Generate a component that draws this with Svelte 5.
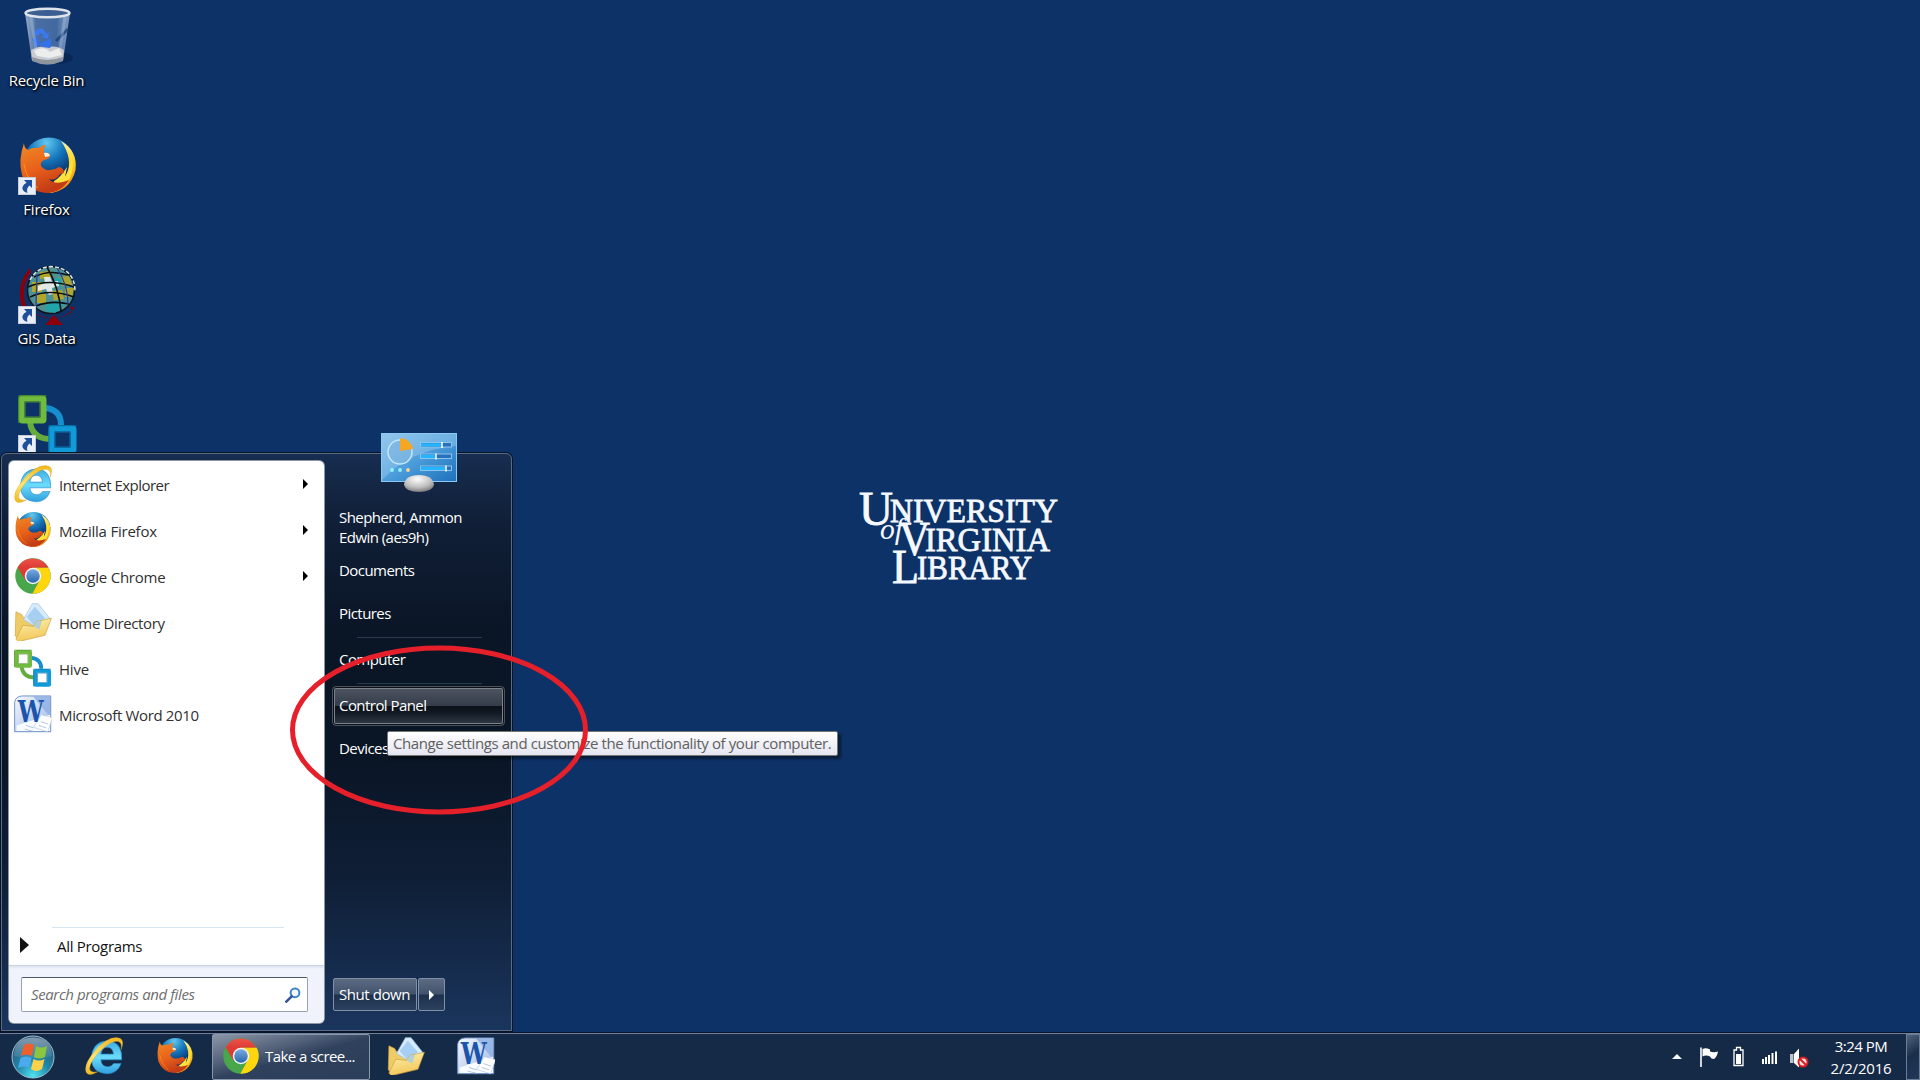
<script>
  const shortcuts = [
    { name: 'Recycle Bin', icon: 'bin' },
    { name: 'Firefox', icon: 'firefox', link: true },
    { name: 'GIS Data', icon: 'gis', link: true },
    { name: 'Hive', icon: 'hive', link: true }
  ];
  const programs = [
    { name: 'Internet Explorer', icon: 'ie', more: true, fit: 'tight' },
    { name: 'Mozilla Firefox', icon: 'firefox', more: true, fit: 'loose' },
    { name: 'Google Chrome', icon: 'chrome', more: true, fit: 'loose' },
    { name: 'Home Directory', icon: 'folder', fit: 'snug' },
    { name: 'Hive', icon: 'hive', fit: 'loose' },
    { name: 'Microsoft Word 2010', icon: 'word', fit: 'snug' }
  ];
</script>

{#snippet art(kind)}
  <svg class="art" viewBox="0 0 60 60">
    {#if kind === 'bin'}
      <ellipse cx="38" cy="51" rx="17" ry="6" fill="#061c42" opacity=".5" />
      <path d="M7 6 L14 54 Q29 61 45 54 L52 6Z" fill="url(#glass)" />
      <path d="M13 43 Q21 38 29 40 Q39 38 46 43 L45 53 Q29 60 14 53Z" fill="#c9cbd0" />
      <path d="M16 44 Q25 38 32 45 L41 41 L44 48 L31 51 L19 49Z" fill="#eceded" />
      <path d="M14 50 Q29 56 45 50 L44.500 54 Q29 61 14.500 54Z" fill="#8f959d" />
      <path d="M16 26 Q19 20 25 22 L29 27 L31 25 L30 32 L24 30 L26 28 L22 26 L20 30Z" fill="#3d78ee" />
      <path d="M14 32 L20 30 L21 34 L22 38 L18 40Z M24 40 L22 36 L27 34 L32 31 Q35 37 32 41Z" fill="#3470e6" />
      <path d="M38 34 L50 22" stroke="#153a75" stroke-width="3" opacity=".7" />
      <path d="M13 10 L18 42 M47 10 L42 42" stroke="#bcd4ee" stroke-width="3" opacity=".3" />
      <ellipse cx="29.500" cy="6" rx="22" ry="4.300" fill="#3c5f93" stroke="#dfe4ea" stroke-width="2.500" />
    {:else if kind === 'firefox'}
      <circle cx="31" cy="28" r="26.500" fill="url(#globe)" />
      <path d="M43 5 Q60 15 57.500 34 Q52 56 30 57 Q43 49 49 38 Q55 22 43 5Z" fill="url(#flame)" />
      <path d="M51 16 Q55 27 47 41 L49 31 Q42 42 36 45 L33 57 Q50 53 54 36 Q57 24 51 16Z" fill="#ffe13c" />
      <path d="M6 7 Q6 12 10 14 Q14 11 21 12 Q23 9 28 9 Q25 13 26 17 Q32 16 32 20 Q31 23 26 24 Q22 26 23 30 Q27 35 32 34 Q37 34 41 31 Q46 32 46 37 Q42 37 40 41 Q36 45 31 43 Q37 50 51 44 Q43 57 28 57 Q10 55 4 39 Q0 24 6 7Z" fill="url(#fox)" />
      <path d="M26 17 Q31 16 32 20 L27 21Z" fill="#fff0de" />
      <path d="M6 28 Q8 43 20 52" fill="none" stroke="#f4b21c" stroke-width="1.200" opacity=".55" />
    {:else if kind === 'gis'}
      <path d="M12 3 Q-3 20 4 42 L8 41 Q2 23 13 7Z M8 43 Q35 64 57 43 L52 41 L54 47 Q37 59 14 47Z M36 50 L27 60 H45Z" fill="#8b0008" />
      <circle cx="33" cy="25" r="23.500" fill="#4f9296" stroke="#10131c" stroke-width="1.500" />
      <path d="M14 17 h10 v10 h-10Z M18 29 h10 v9 h-10Z M22 7 l11 -1 v7 l-11 1Z M40 12 l11 -1 l3 9 l-11 1Z M34 26 l10 -1 l2 9 l-10 2Z M47 23 l9 0 l-2 9 l-7 0Z" fill="#b0a62a" />
      <path d="M29 38 l10 -3 l7 5 l-9 8 l-9-2Z M36 14 l7 -2 l2 8 l-7 2Z" fill="#22a5a8" />
      <path d="M26 12 l6 0 l2 5 l6 -1 l1 5 l-7 2 l1 6 l-4 1 l-3-6 l-8 2 l0-5 l7-3Z" fill="#f1f3ee" opacity=".9" />
      <path d="M10 22 Q30 13 56 22 M12 32 Q31 23 56 32 M29 2 Q41 23 43 46 M16 12 Q31 4 50 10 M18 41 Q33 35 51 39" fill="none" stroke="#0c0e14" stroke-width="1.600" />
      <path d="M19 9 L18 41 M39 3 Q50 20 50 39" stroke="#2a3e9a" stroke-width="1.300" fill="none" />
      <path d="M12 15 Q19 2 33 1.500 Q57 3 57 27" fill="none" stroke="#dce6e6" stroke-width="1.500" stroke-dasharray="4 2" />
    {:else if kind === 'hive'}
      <path d="M28 14 Q43 16 43 31" fill="none" stroke="#168fce" stroke-width="6" />
      <path d="M12 28 Q14 44 31 45" fill="none" stroke="#65ac3c" stroke-width="6" />
      <rect x="3.500" y="4.500" width="22" height="22" rx="1" fill="none" stroke="#70ba40" stroke-width="6" />
      <rect x="33.500" y="34.500" width="22" height="22" rx="1" fill="none" stroke="#109bd8" stroke-width="6" />
      <path d="M.8 29 V1.800 H28.500 M7 8 H22 V23 H7Z" fill="none" stroke="#4e9029" stroke-width="1" />
      <path d="M31 59 V31.800 H58.500 M37 38 H52 V53 H37Z" fill="none" stroke="#0874ac" stroke-width="1" />
    {:else if kind === 'ie'}
      <path fill-rule="evenodd" d="M58 36 H25 Q26 47 36 47 Q42 47 45 42 H57 Q51 58 35 58 Q11 57 10 34 Q11 8 35 6 Q59 7 58 36Z M25 27 H45 Q44 16 35 16 Q27 16 25 27Z" fill="url(#ieBlue)" stroke="#278fce" stroke-width="1" />
      <path d="M15 28 Q19 11 37 10" fill="none" stroke="#c8f5ff" stroke-width="2.500" opacity=".7" />
      <path d="M57 20 Q64 2 51 1 Q34 0 15 23 Q-3 44 2 56 Q6 63 20 55 Q12 57 8 53 Q4 44 22 24 Q41 4 53 7 Q59 9 57 20Z" fill="url(#gold)" stroke="#dca620" stroke-width=".6" />
    {:else if kind === 'chrome'}
      <circle cx="30" cy="30" r="28" fill="#48a64b" />
      <path d="M30 30 L5.700 16 A28 28 0 0 1 54.300 17 L30 17Z" fill="url(#chromeRed)" />
      <path d="M30 17 H54.700 A28 28 0 0 1 29 58 L41 36Z" fill="#ffd50d" />
      <path d="M5.700 16 L18 37 L30 30 L30 17Z" fill="#df3b32" />
      <circle cx="30" cy="30" r="13" fill="#f1f3f4" />
      <circle cx="30" cy="30" r="10.700" fill="url(#chromeBlue)" />
    {:else if kind === 'folder'}
      <path d="M3 14 L12 18 L15 23 L44 18 L47 48 L9 58 L2 52Z" fill="#efcb66" stroke="#c99f3f" />
      <path d="M29 1 L38 1 L57 25 L43 43 L15 26Z" fill="#d6ebfb" stroke="#98bedc" />
      <path d="M33 6 L49 24 L32 36 L20 22Z" fill="#a7cff3" />
      <path d="M3 57 L14 35 L31 37 L36 29 L59 24 L49 51 L7 61Z" fill="url(#folderFront)" stroke="#c99e3a" />
      <path d="M36 29 L44 28 L40 42 L32 38Z" fill="#a4cce8" opacity=".8" />
    {:else if kind === 'word'}
      <path d="M1 12 Q2 2 13 1.500 H58 V58 H1Z" fill="url(#wordBg)" stroke="#6e8fc5" stroke-width="1.500" />
      <path d="M30 2 H57 V35 Q44 20 30 2Z" fill="#8eafe2" opacity=".8" />
      <path d="M4 48 Q29 40 57 31 V57 H4Z" fill="#f8fbff" />
      <path d="M43 31 L61 36 L53 58 L31 51Z" fill="#fff" stroke="#b8c6e0" />
      <path d="M19 48 L31 52 M17 54 L30 57 M42 42 L54 46 M39 48 L51 52" stroke="#a6b9d8" stroke-width="1.300" />
      <text class="wordmark" x="6" y="43" textLength="41" lengthAdjust="spacingAndGlyphs">W</text>
    {/if}
  </svg>
{/snippet}

<svg class="defs" width="0" height="0">
  <defs>
    <linearGradient id="glass"><stop stop-color="#b3c5dd" stop-opacity=".8" /><stop offset=".25" stop-color="#4a6ea3" /><stop offset=".7" stop-color="#41689f" /><stop offset="1" stop-color="#a8bddb" stop-opacity=".75" /></linearGradient>
    <radialGradient id="globe" cx=".45" cy=".1" r=".8"><stop stop-color="#62c8ef" /><stop offset=".4" stop-color="#1678bd" /><stop offset=".85" stop-color="#072a68" /></radialGradient>
    <linearGradient id="flame" x2="0" y2="1"><stop stop-color="#fff6a8" /><stop offset=".4" stop-color="#ffd11d" /><stop offset="1" stop-color="#ee7b13" /></linearGradient>
    <linearGradient id="fox" x2=".4" y2="1"><stop stop-color="#ef8b24" /><stop offset=".55" stop-color="#e9611a" /><stop offset="1" stop-color="#c33c16" /></linearGradient>
    <linearGradient id="ieBlue" x2="0" y2="1"><stop stop-color="#3dabe0" /><stop offset=".5" stop-color="#6bdcfb" /><stop offset="1" stop-color="#2fa0dc" /></linearGradient>
    <linearGradient id="gold" x2="0" y2="1"><stop stop-color="#f3b71c" /><stop offset=".5" stop-color="#ffe574" /><stop offset="1" stop-color="#f1b820" /></linearGradient>
    <linearGradient id="chromeRed" x2="0" y2="1"><stop stop-color="#ef5148" /><stop offset="1" stop-color="#c92a25" /></linearGradient>
    <linearGradient id="chromeBlue" x2="0" y2="1"><stop stop-color="#77ace0" /><stop offset="1" stop-color="#2a66ae" /></linearGradient>
    <linearGradient id="folderFront" x2=".3" y2="1"><stop stop-color="#fff3b0" /><stop offset="1" stop-color="#f2c75b" /></linearGradient>
    <linearGradient id="wordBg" x2="1" y2="1"><stop stop-color="#f4f8ff" /><stop offset="1" stop-color="#9db8e4" /></linearGradient>
    <linearGradient id="screen" x2="1" y2="1"><stop stop-color="#7fbce8" /><stop offset=".5" stop-color="#4d9edb" /><stop offset="1" stop-color="#1d70bb" /></linearGradient>
    <radialGradient id="stand" cx=".45" cy=".25" r=".8"><stop stop-color="#fff" /><stop offset=".6" stop-color="#bdbdbd" /><stop offset="1" stop-color="#707070" /></radialGradient>
    <radialGradient id="orb" cx=".5" cy=".95" r=".9"><stop stop-color="#4fe3f0" /><stop offset=".45" stop-color="#2185a8" /><stop offset="1" stop-color="#2c5578" /></radialGradient>
    <linearGradient id="gloss" x2="0" y2="1"><stop stop-color="#fff" stop-opacity=".75" /><stop offset="1" stop-color="#fff" stop-opacity=".12" /></linearGradient>
  </defs>
</svg>

<main class="screen">
  <section class="desktop">
    <div class="shortcuts">
      {#each shortcuts as item}
        <div class="shortcut">
          <div class="picture">
            {@render art(item.icon)}
            {#if item.link}
              <svg class="link" viewBox="0 0 18 18"><rect x=".5" y=".5" width="17" height="17" fill="#e9eef6" stroke="#c5ccd8" /><path d="M6 3 H14 V11 L11.500 8.500 Q8 11 9.500 16 Q3.500 14 4.500 10 Q5.500 7 8.500 5.700Z" fill="#1f4f9c" /></svg>
            {/if}
          </div>
          <span>{item.name}</span>
        </div>
      {/each}
    </div>

    <svg class="logo" viewBox="0 0 200 96">
      <text class="cap" x="0" y="38" font-size="48" textLength="34" lengthAdjust="spacingAndGlyphs">U</text>
      <text x="31" y="35" font-size="34" textLength="168" lengthAdjust="spacingAndGlyphs">NIVERSITY</text>
      <text class="of" x="21" y="52" font-size="30" textLength="23" lengthAdjust="spacingAndGlyphs">of</text>
      <text class="cap" x="40" y="68" font-size="48" textLength="31" lengthAdjust="spacingAndGlyphs">V</text>
      <text x="66" y="64" font-size="34" textLength="125" lengthAdjust="spacingAndGlyphs">IRGINIA</text>
      <text class="cap" x="33" y="96" font-size="48" textLength="27" lengthAdjust="spacingAndGlyphs">L</text>
      <text x="58" y="92" font-size="34" textLength="115" lengthAdjust="spacingAndGlyphs">IBRARY</text>
    </svg>
  </section>

  <section class="start">
    <div class="left">
      <ul class="programs">
        {#each programs as p}
          <li>{@render art(p.icon)}<span class={p.fit}>{p.name}</span>{#if p.more}<i class="arrow"></i>{/if}</li>
        {/each}
      </ul>
      <div class="all"><i class="big-arrow"></i><span>All Programs</span></div>
      <div class="search">
        <div class="box">
          <span>Search programs and files</span>
          <svg viewBox="0 0 16 16"><circle cx="10" cy="5.800" r="4.400" fill="#f3f8ff" stroke="#3f83c6" stroke-width="2" /><path d="M6.700 9.300 L1.300 14.700" stroke="#31539b" stroke-width="2.500" stroke-linecap="round" /></svg>
        </div>
      </div>
    </div>
    <div class="right">
      <div class="user"><span>Shepherd, Ammon</span><span>Edwin (aes9h)</span></div>
      <div class="place"><span>Documents</span></div>
      <div class="place"><span>Pictures</span></div>
      <hr />
      <div class="place"><span>Computer</span></div>
      <hr />
      <div class="place active"><span>Control Panel</span></div>
      <div class="place"><span>Devices</span></div>
      <div class="power">
        <div class="btn down"><span>Shut down</span></div>
        <div class="btn next"><i class="arrow white"></i></div>
      </div>
    </div>
    <svg class="panel-icon" viewBox="0 0 78 62">
      <rect x="1.500" y="1.500" width="75" height="48" fill="url(#screen)" stroke="#8bc9f2" />
      <path d="M2 2 H76 V14 Q30 18 2 48Z" fill="#bfe2fa" opacity=".3" />
      <circle cx="20" cy="20" r="12" fill="#7db4de" fill-opacity=".5" stroke="#c4e6fb" stroke-width="1.500" />
      <path d="M20 19 V6 Q31 7 33 17Z" fill="#f6a623" />
      <g fill="#2871bd" stroke="#8fc3ea"><rect x="40.500" y="10.500" width="31" height="4.500" /><rect x="40.500" y="22" width="31" height="4.500" /><rect x="40.500" y="34" width="31" height="4.500" /></g>
      <path d="M41 12.800 h20 M41 24.300 h14 M41 36.300 h24" stroke="#25b4ff" stroke-width="3.200" />
      <path d="M62 10v6 M56 21.500v6 M66 33.500v6" stroke="#fff" stroke-width="1.500" />
      <circle cx="12" cy="38" r="1.900" fill="#8ff4ff" /><circle cx="20" cy="38" r="1.900" fill="#8ff4ff" /><circle cx="28" cy="38" r="1.900" fill="#ffd48e" />
      <path d="M24 53 Q25 43 39 43 Q53 43 54 53 Q52 60 39 60 Q26 60 24 53Z" fill="url(#stand)" />
    </svg>
  </section>

  <div class="tooltip"><span>Change settings and customize the functionality of your computer.</span></div>
  <svg class="ring" viewBox="0 0 300 170"><ellipse cx="150" cy="85" rx="146.500" ry="82" fill="none" stroke="#e6202a" stroke-width="5" /></svg>

  <footer class="taskbar">
    <svg class="orb" viewBox="0 0 52 46">
      <circle cx="26" cy="23" r="21" fill="url(#orb)" stroke="#9fc0d0" />
      <path d="M7 22 Q7 4 26 3.500 Q45 4 45 22 Q26 27 7 22Z" fill="url(#gloss)" opacity=".55" />
      <path d="M17 11 Q22 8 27 11 L25 22 Q19 19 14 22Z" fill="#ee5f2c" />
      <path d="M29 12 Q34 15 40 12 L38 23 Q32 26 27 23Z" fill="#8cc63e" />
      <path d="M13.500 24 Q19 21 24.500 24 L22 34 Q17 31 11 34Z" fill="#4ba9ee" />
      <path d="M26.500 25 Q32 28 37.500 25 L35 35 Q29 39 24 35Z" fill="#fdd24a" />
    </svg>
    <div class="pin ie">{@render art('ie')}</div>
    <div class="pin ff">{@render art('firefox')}</div>
    <div class="task">{@render art('chrome')}<span>Take a scree...</span></div>
    <div class="pin fo">{@render art('folder')}</div>
    <div class="pin wo">{@render art('word')}</div>
    <div class="tray">
      <svg viewBox="0 0 150 30">
        <path d="M7 18 L12 13 L17 18Z" fill="#f2f5fa" />
        <path d="M36 6.500 V26" stroke="#fff" stroke-width="1.600" /><path d="M37.500 8 Q41 6.500 45 8.500 V10.500 Q49 12 53 10.500 Q52 16 49 18 Q46 18 45 15.500 Q41 13.500 37.500 15.500Z" fill="#fff" />
        <path d="M71.500 6.500 H75.500 V9 H78 V24.500 H69 V9 H71.500Z" fill="none" stroke="#fff" stroke-width="1.300" /><rect x="71" y="13" width="5" height="10" fill="#fff" />
        <path d="M97 18h2v5h-2Z M100 16h2v7h-2Z M103 14h2v9h-2Z M106.500 12h2v11h-2Z M110 10.500h2v12.500h-2Z" fill="#fff" />
        <path d="M125 13h3.500 v9H125Z" fill="#b9c1cb" /><path d="M129 13 L134 7.500 V26.500 L129 22Z" fill="#fff" />
        <circle cx="138" cy="21" r="4.500" fill="#f6dede" stroke="#d81f23" stroke-width="2" /><path d="M134.800 17.800 L141.200 24.200" stroke="#d81f23" stroke-width="2" />
      </svg>
      <div class="clock"><span class="time">3:24 PM</span><span>2/2/2016</span></div>
      <div class="peek"></div>
    </div>
  </footer>
</main>

<style>
  :global(body) { margin: 0; overflow: hidden; }
  .defs { position: absolute; }
  .screen { position: relative; width: 1920px; height: 1080px; display: flex; flex-direction: column; background: #0d3268; color: #fff; font: 15px/20px "Open Sans", "Noto Sans", sans-serif; overflow: hidden; white-space: nowrap; }
  span { display: inline-block; line-height: 18px; padding-bottom: 2px; }
  .art { display: block; width: 38px; height: 38px; flex: none; }
  .wordmark { font: bold 46px "DejaVu Serif", serif; fill: #1a54ab; }
  .desktop { height: 1032px; display: grid; grid-template-columns: 93px 1fr; }
  .shortcuts { padding-top: 7px; }
  .shortcut { height: 129px; display: flex; flex-direction: column; align-items: center; }
  .shortcut .art { width: 60px; height: 60px; }
  .shortcut span { margin-top: 4px; letter-spacing: -.25px; text-shadow: 1px 1px 2px #000, 0 1px 3px #000; }
  .picture { position: relative; padding-left: 2px; }
  .link { position: absolute; left: 2px; top: 41px; width: 18px; height: 18px; }
  .logo { width: 200px; height: 96px; margin: 487px 0 0 766px; overflow: visible; }
  .logo text { font-family: "Liberation Serif", serif; fill: #f5f9ff; stroke: #f5f9ff; stroke-width: .8px; }
  .logo .of { font-style: italic; stroke-width: 0; }

  .start { position: absolute; left: 1px; top: 453px; width: 511px; height: 578px; box-sizing: border-box; display: flex; gap: 8px; padding: 7px 6px 7px 7px; border: 1px solid #5b6c80; border-radius: 6px 6px 0 0; background: linear-gradient(#172d50 0, #101f37 70px, #0a1525 180px, #0a1525 300px, #0f1f37 430px, #1a355d 100%); box-shadow: 0 0 0 1px #06142b; }
  .left { flex: none; width: 315px; display: flex; flex-direction: column; background: #fff; border-radius: 5px; box-shadow: 0 0 0 1px #8a97a5; color: #303030; overflow: hidden; }
  .programs { list-style: none; margin: 0; padding: 0; }
  .programs li { height: 46px; box-sizing: border-box; display: flex; align-items: center; padding: 0 16px 0 5px; }
  .programs span { margin: 3px 0 0 7px; }
  .programs .tight { letter-spacing: -.53px; }
  .programs .snug { letter-spacing: -.36px; }
  .programs .loose { letter-spacing: -.22px; }
  .arrow { margin-left: auto; width: 0; height: 0; border: 5px solid transparent; border-left-color: #000; border-right: 0; }
  .white { margin: auto; border-left-color: #fff; }
  .all { height: 38px; margin-top: auto; display: flex; align-items: center; gap: 28px; padding-left: 11px; color: #111; background: linear-gradient(#d6e5f2, #d6e5f2) 43px 0 / 232px 1px no-repeat; }
  .all span { letter-spacing: -.3px; margin-top: 2px; }
  .big-arrow { width: 0; height: 0; border: 8.5px solid transparent; border-left: 9px solid #111; border-right: 0; margin-top: -2px; }
  .search { height: 58px; box-sizing: border-box; padding: 11px 16px 0 12px; background: #f0f3fb; border-top: 1px solid #c8d3e1; box-shadow: inset 0 2px 2px #e0e6f0; }
  .box { height: 35px; box-sizing: border-box; border: 1px solid #99a2ae; border-top-color: #4e5967; border-radius: 2px; background: #fff; display: flex; align-items: center; justify-content: space-between; padding: 0 6px 0 9px; color: #6e6e6e; font-style: italic; }
  .box span { letter-spacing: -.39px; }
  .box svg { width: 16px; height: 16px; }
  .right { flex: none; width: 173px; display: flex; flex-direction: column; letter-spacing: -.55px; }
  .user { padding: 47px 0 0 7px; height: 43px; display: flex; flex-direction: column; }
  .place { height: 43px; box-sizing: border-box; padding-left: 7px; display: flex; align-items: center; }
  .user + .place { margin-top: -2px; }
  hr { width: 125px; height: 1px; margin: 2px 0 0 25px; border: 0; background: #29384a; }
  .active { height: 40px; margin: 2px 0 1px; border: 1px solid #4a515b; border-radius: 4px; padding-left: 6px; background: linear-gradient(#4f5764 0, #343c49 50%, #0b1119 51%, #131b26 70%, #333c48 100%); box-shadow: inset 0 0 0 1px #0a0f18, inset 0 0 0 2px #7d8289; }
  .power { display: flex; gap: 1px; margin: auto 0 12px 1px; letter-spacing: -.45px; }
  .btn { height: 33px; box-sizing: border-box; display: flex; align-items: center; justify-content: center; border: 1px solid #8090a7; border-radius: 2px; background: linear-gradient(#5c6b82 0, #42536d 49%, #1d304c 51%, #2b415f 100%); }
  .down { width: 84px; padding-right: 1px; }
  .next { width: 27px; }
  .panel-icon { position: absolute; left: 378px; top: -22px; width: 78px; height: 62px; }

  .tooltip { position: absolute; left: 387px; top: 731px; width: 451px; height: 25px; box-sizing: border-box; padding: 1px 0 0 5px; border: 1px solid #767676; border-radius: 2px; background: linear-gradient(#fff, #e4e5f0); color: #606060; letter-spacing: -.4px; box-shadow: 3px 3px 3px #0007; }
  .ring { position: absolute; left: 289px; top: 644.5px; width: 300px; height: 170px; }

  .taskbar { height: 48px; box-sizing: border-box; display: flex; align-items: center; background: #152a47; border-top: 1px solid #071429; box-shadow: inset 0 1px #71839a; }
  .orb { width: 52px; height: 46px; margin-left: 7px; }
  .pin { margin-top: -2px; }
  .pin.ie { margin-left: 26px; }
  .pin.ff { margin-left: 33px; }
  .pin.fo { margin-left: 17px; }
  .pin.wo { margin-left: 32px; }
  .task { width: 158px; height: 46px; box-sizing: border-box; margin-left: 18px; display: flex; align-items: center; padding-left: 9px; gap: 5px; border: 1px solid #8a97aa; border-radius: 2px; background: linear-gradient(165deg, #8b96a7 0, #536179 34%, #2f415d 52%, #2a3d59 100%); letter-spacing: -.55px; }
  .task .art { margin-top: -2px; }
  .tray { margin-left: auto; display: flex; align-items: center; height: 47px; }
  .tray > svg { width: 150px; height: 30px; margin-top: -2px; }
  .clock { width: 76px; display: flex; flex-direction: column; align-items: center; margin: 1px 7px 0 8px; letter-spacing: -.2px; }
  .clock span { line-height: 22px; padding: 0; }
  .clock .time { letter-spacing: -.5px; }
  .peek { width: 14px; height: 46px; box-sizing: border-box; border: 1px solid #6a7d96; background: linear-gradient(145deg, #51627b, #1a2e4b 45%, #22385a); }
</style>
